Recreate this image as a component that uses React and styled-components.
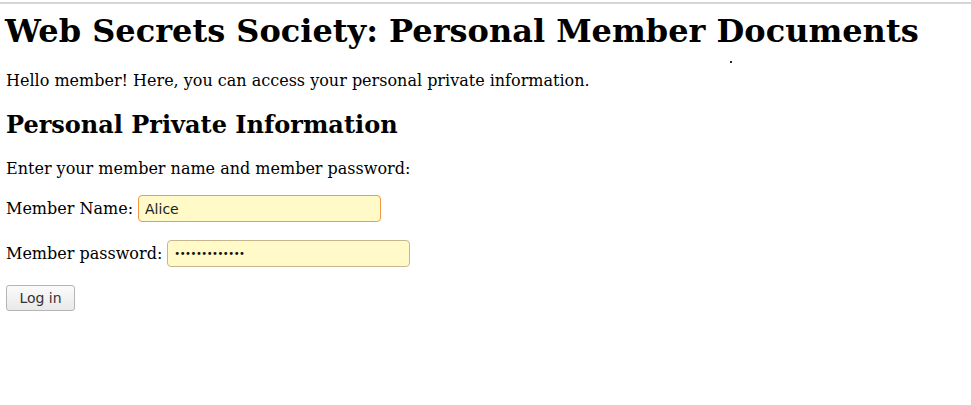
import React from 'react'
import styled, {createGlobalStyle} from 'styled-components'

const GlobalStyle = createGlobalStyle`
    html, body {
        margin: 0;
        padding: 0;
        background: #ffffff;
    }
    body {
        font-family: "DejaVu Serif", "Liberation Serif", serif;
        color: #000000;
    }
`

const App = () => {
    return (
        <>
            <GlobalStyle />
            <Page>
                <Dot />
                <Title>Web Secrets Society: Personal Member Documents</Title>
                <Text>Hello member! Here, you can access your personal private information.</Text>
                <SubTitle>Personal Private Information</SubTitle>
                <Text>Enter your member name and member password:</Text>
                <Form onSubmit={e => e.preventDefault()}>
                    <Row>
                        <Label htmlFor="member-name">Member Name:</Label>
                        <Field id="member-name" type="text" defaultValue="Alice" focused />
                    </Row>
                    <Row>
                        <Label htmlFor="member-password">Member password:</Label>
                        <Field id="member-password" type="password" defaultValue="supersecret42" />
                    </Row>
                    <LoginButton type="submit">Log in</LoginButton>
                </Form>
            </Page>
        </>
    )
}

export default App

const Page = styled.div`
    position: relative;
    margin-top: 2px;
    border-top: 2px solid #d6d6d6;
    padding: 0 6px;
    min-height: 399px;
`

const Dot = styled.span`
    position: absolute;
    left: 730px;
    top: 57px;
    width: 2px;
    height: 2px;
    background: #3b1d2c;
`

const Title = styled.h1`
    font-size: 32px;
    font-weight: bold;
    margin: 8px 0 21px -1px;
    line-height: normal;
`

const SubTitle = styled.h2`
    font-size: 24px;
    font-weight: bold;
    margin: 20px 0 20px;
    line-height: normal;
`

const Text = styled.p`
    font-size: 16px;
    margin: 0;
    line-height: normal;
`

const Form = styled.form`
    display: flex;
    flex-direction: column;
    align-items: flex-start;
    gap: 18px;
    margin-top: 17px;
`

const Row = styled.div`
    display: flex;
    align-items: center;
    gap: 5px;
    height: 27px;
    font-size: 16px;
`

const Label = styled.label`
    font-size: 16px;
`

const Field = styled.input`
    box-sizing: border-box;
    width: 243px;
    height: 27px;
    padding: 0 6px;
    border: 1px solid ${p => (p.focused ? '#f29a4a' : '#c9b58c')};
    border-radius: 4px;
    background: #fffac8;
    font-family: "DejaVu Sans", "Liberation Sans", sans-serif;
    font-size: 14px;
    color: #222222;
    outline: none;

    &[type="password"] {
        font-size: 10px;
        letter-spacing: -0.5px;
        color: #111111;
    }
`

const LoginButton = styled.button`
    box-sizing: border-box;
    width: 69px;
    height: 26px;
    border: 1px solid #b5b5b5;
    border-radius: 3px;
    background: linear-gradient(#fbfbfb, #e9e9e9);
    font-family: "DejaVu Sans", "Liberation Sans", sans-serif;
    font-size: 14px;
    color: #333333;
    padding: 0;
`
